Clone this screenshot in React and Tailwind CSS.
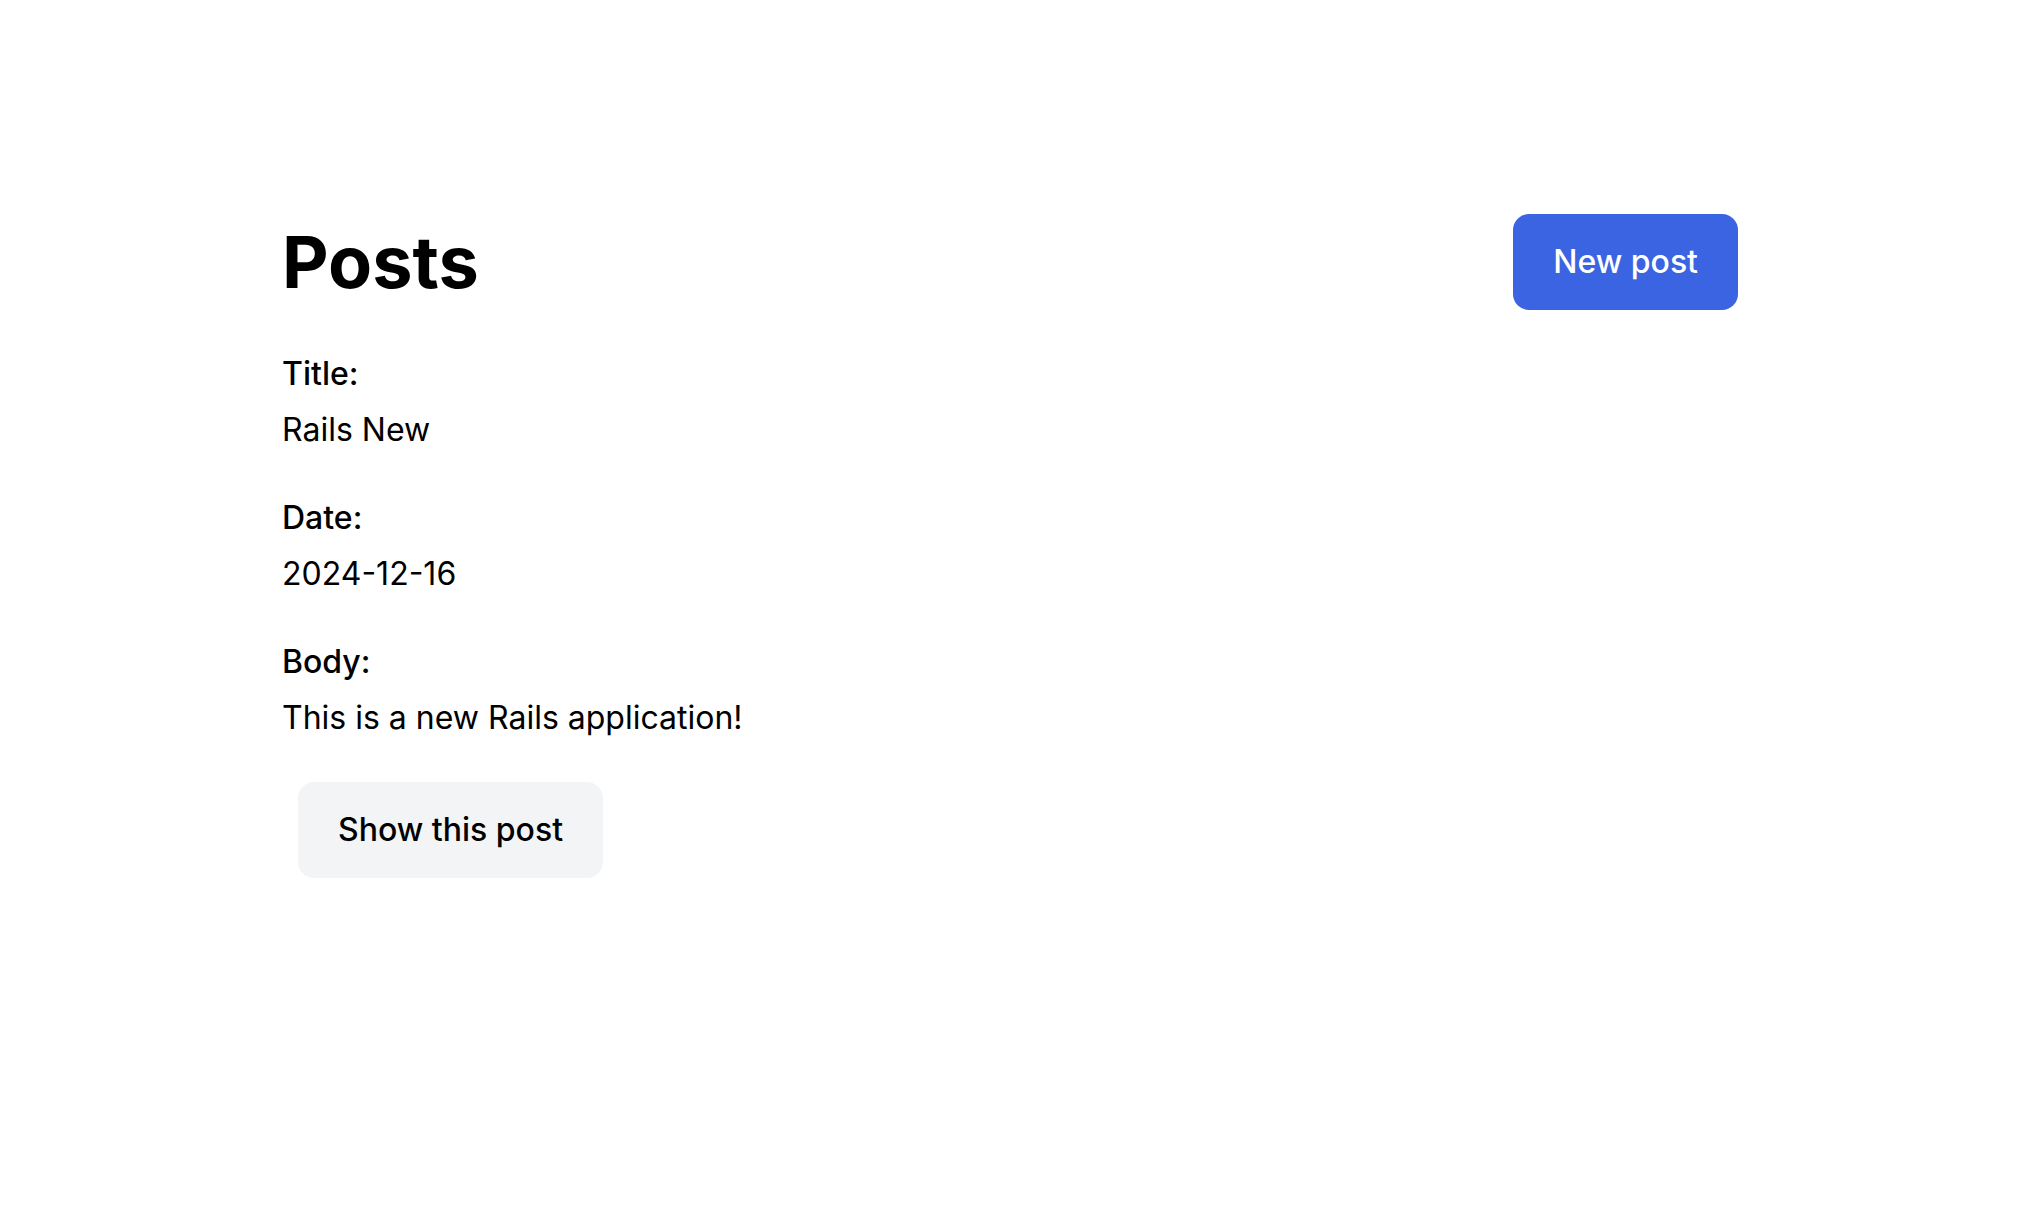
export default function App() {
  const post = {
    title: "Rails New",
    date: "2024-12-16",
    body: "This is a new Rails application!",
  };

  return (
    <div className="min-h-screen bg-white text-black font-['Inter',sans-serif]">
      <main className="mx-auto w-[1536px] px-10 pt-[214px] flex">
        <div className="w-full">
          <div className="flex justify-between items-center">
            <h1 className="font-bold text-[72px] leading-[80px]">Posts</h1>
            <a
              href="#"
              className="rounded-2xl py-6 px-10 bg-[#3a64e2] text-white block font-medium text-[32px] leading-[48px]"
            >
              New post
            </a>
          </div>

          <div id="posts" className="min-w-full text-[32px] leading-[48px]">
            <div id="post_1">
              <p className="my-10">
                <strong className="block font-medium mb-2">Title:</strong>
                {post.title}
              </p>
              <p className="my-10">
                <strong className="block font-medium mb-2">Date:</strong>
                {post.date}
              </p>
              <p className="my-10">
                <strong className="block font-medium mb-2">Body:</strong>
                {post.body}
              </p>
            </div>
            <p>
              <a
                href="#"
                className="ml-4 rounded-2xl py-6 px-10 bg-[#f3f4f6] inline-block font-medium"
              >
                Show this post
              </a>
            </p>
          </div>
        </div>
      </main>
    </div>
  );
}
